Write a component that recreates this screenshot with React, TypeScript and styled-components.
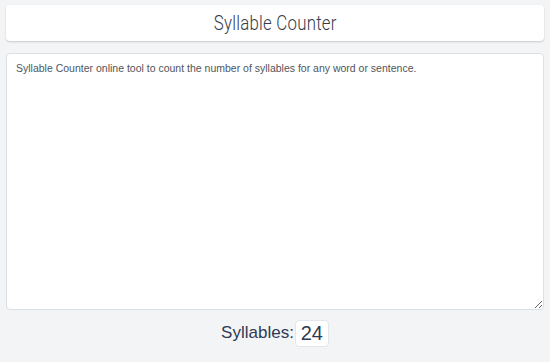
import * as React from 'react';
import styled, { createGlobalStyle } from 'styled-components';

const GlobalStyle = createGlobalStyle`
    html, body {
        margin: 0;
        padding: 0;
        background: #f3f4f6;
    }
`;

const Page = styled.div`
    display: flex;
    flex-direction: column;
    padding: 5px 6px 0 6px;
    height: 362px;
    box-sizing: border-box;
`;

const HeaderCard = styled.div`
    display: flex;
    align-items: center;
    justify-content: center;
    height: 36px;
    background: #ffffff;
    border-radius: 4px;
    box-shadow: 0 1px 2px rgba(0, 0, 0, 0.18);
`;

const Title = styled.h1`
    display: inline-block;
    margin: 0;
    font-family: 'Roboto', 'Liberation Sans', sans-serif;
    font-weight: 300;
    font-size: 20px;
    letter-spacing: 0.3px;
    color: #353b4a;
    transform: scaleX(0.84);
`;

const TextBox = styled.textarea`
    margin-top: 12px;
    height: 257px;
    box-sizing: border-box;
    padding: 7px 9px;
    border: 1px solid #dcdfe3;
    border-radius: 4px;
    background: #ffffff;
    font-family: 'Liberation Sans', Arial, sans-serif;
    font-size: 10.5px;
    line-height: 14px;
    color: #50555c;
    resize: vertical;
    outline: none;
`;

const Footer = styled.div`
    display: flex;
    align-items: center;
    justify-content: center;
    height: 46px;
`;

const Label = styled.span`
    font-family: 'Liberation Sans', Arial, sans-serif;
    font-size: 17px;
    color: #2e3a55;
`;

const Count = styled.span`
    display: inline-flex;
    align-items: center;
    justify-content: center;
    margin-left: 1px;
    width: 34px;
    height: 27px;
    box-sizing: border-box;
    background: #ffffff;
    border: 1px solid #e2e6ea;
    border-radius: 4px;
    font-family: 'Liberation Sans', Arial, sans-serif;
    font-size: 20px;
    color: #2e3a55;
`;

export default function App() {
    const [text, setText] = React.useState(
        'Syllable Counter online tool to count the number of syllables for any word or sentence.'
    );
    return (
        <Page>
            <GlobalStyle />
            <HeaderCard>
                <Title>Syllable Counter</Title>
            </HeaderCard>
            <TextBox value={text} onChange={(e) => setText(e.target.value)} autoFocus />
            <Footer>
                <Label>Syllables:</Label>
                <Count>24</Count>
            </Footer>
        </Page>
    );
}
